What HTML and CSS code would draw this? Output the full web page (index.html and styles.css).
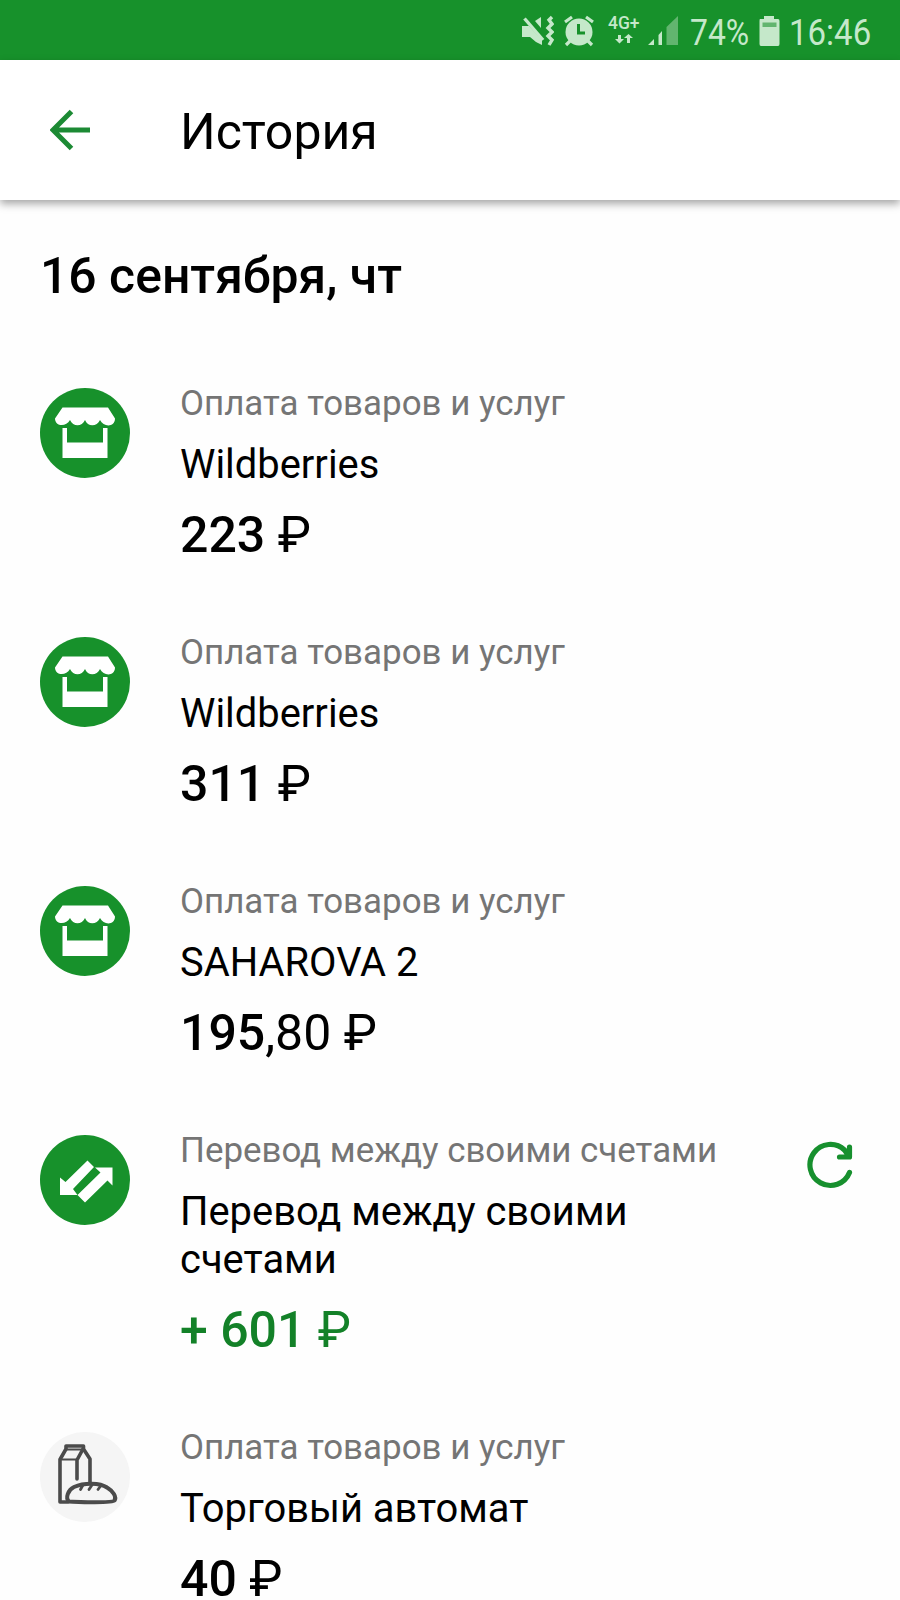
FILE: index.html
```html
<!DOCTYPE html>
<html lang="ru">
<head>
<meta charset="utf-8">
<title>История</title>
<link rel="stylesheet" href="styles.css">
</head>
<body>
<svg class="defs" width="0" height="0" aria-hidden="true">
  <symbol id="shop" viewBox="0 0 90 90">
    <circle cx="45" cy="45" r="45" fill="#17912b"/>
    <path d="M22.500 19.500H68L75 30.500C75 39.500 63.500 39.500 60 32C57 39 47.500 39 45 32C42 39 33 39 30 32C26 39.500 15 38.500 15 30.500Z" fill="#fff"/>
    <path d="M22.500 40H27V54.500H63V40H67.500V70H22.500Z" fill="#fff"/>
  </symbol>
</svg>
<header class="status">
  <svg class="mute" width="33" height="32" viewBox="0 0 33 32">
    <path d="M1 11H8L21 25V30L15 27L9 22H1Z" fill="#c5e8ca"/><path d="M14 6L20 2V13Z" fill="#c5e8ca"/>
    <path d="M3.500 3.500L22 25" stroke="#c5e8ca" stroke-width="3.400"/>
    <path d="M31 2L28 5L31 9L27 13L31 17L27 21L31 25L28 30" fill="none" stroke="#c5e8ca" stroke-width="3.400"/>
  </svg>
  <svg class="alarm" width="30" height="32" viewBox="0 0 30 32">
    <circle cx="15" cy="17" r="13.500" fill="#c5e8ca"/>
    <path d="M1 7L8 2M22 2L29 7M6 26L2 30M24 26L28 30" stroke="#c5e8ca" stroke-width="3.200"/>
    <path d="M14.500 9V18H21" fill="none" stroke="#17912b" stroke-width="3"/>
  </svg>
  <div class="net">
    <span class="net-label">4G+</span>
    <svg width="18" height="10" viewBox="0 0 18 10"><path d="M3 1H6V5H9L4.500 9.500L0 5H3ZM12 9H15V4H18L13.500 0L9 4H12Z" fill="#c5e8ca"/></svg>
  </div>
  <svg class="signal" width="30" height="30" viewBox="0 0 30 30">
    <path d="M0 30L6 24V30ZM10.500 30V20L14 16V30Z" fill="#c5e8ca"/><path d="M18.500 30V12L30 1V30Z" fill="#62b56f"/>
  </svg>
  <span class="stat percent"><span class="narrow">74%</span></span>
  <svg class="battery" width="21" height="30" viewBox="0 0 21 30">
    <path d="M1 3H5V0H15V3H19Q20.500 3 20.500 5V28Q20.500 30 19 30H2Q.5 30 .5 28V5Q.5 3 1 3Z" fill="#c5e8ca"/><path d="M3.500 6.500H17.500V11H3.500Z" fill="#62b56f"/>
  </svg>
  <span class="stat clock"><span class="narrow">16:46</span></span>
</header>
<nav class="bar">
  <svg class="back" width="42" height="42" viewBox="0 0 42 42"><path d="M21.500 2.500L3 21L21.500 39.500M3 21H40" fill="none" stroke="#1c8a34" stroke-width="5"/></svg>
  <h1 class="heading">История</h1>
</nav>
<main class="history">
  <h2 class="date">16 сентября, чт</h2>
  <ul class="list">
    <li class="item">
      <svg class="icon"><use href="#shop"/></svg>
      <div class="info"><div class="kind">Оплата товаров и услуг</div><div class="name">Wildberries</div><div class="sum"><b>223</b> ₽</div></div>
    </li>
    <li class="item">
      <svg class="icon"><use href="#shop"/></svg>
      <div class="info"><div class="kind">Оплата товаров и услуг</div><div class="name">Wildberries</div><div class="sum"><b>311</b> ₽</div></div>
    </li>
    <li class="item">
      <svg class="icon"><use href="#shop"/></svg>
      <div class="info"><div class="kind">Оплата товаров и услуг</div><div class="name">SAHAROVA 2</div><div class="sum"><b>195</b>,80 ₽</div></div>
    </li>
    <li class="item">
      <svg class="icon" viewBox="0 0 90 90">
        <circle cx="45" cy="45" r="45" fill="#17912b"/>
        <path d="M20 42.500L25.500 47L47.500 25.500L54 32L33 54L37.500 60H20Z" fill="#fff"/>
        <path d="M55 32.500H72.500V50.500L67.500 45.500L45 67.500L37.500 60L60.500 37.500Z" fill="#fff"/>
      </svg>
      <div class="info"><div class="kind">Перевод между своими счетами</div><div class="name">Перевод между своими<br>счетами</div><div class="sum income"><b>+ 601</b> ₽</div></div>
      <svg class="repeat" width="48" height="48" viewBox="0 0 48 48"><path d="M43.500 31.500A20.500 20.500 0 1 1 38.500 9L42 14M33.500 16H43.500V6" fill="none" stroke="#17902e" stroke-width="5.200" stroke-linecap="round" stroke-linejoin="round"/></svg>
    </li>
    <li class="item">
      <svg class="icon" viewBox="0 0 90 90" fill="none" stroke="#4b4b4b" stroke-linejoin="round" stroke-linecap="round">
        <circle cx="45" cy="45" r="45" fill="#f5f5f5" stroke="none"/>
        <path d="M28 70H20V27.500L26 17V14H43.500V17L50 27V50" stroke-width="3.600"/>
        <path d="M26 17.500H43.500M20 27.500H37" stroke-width="2.200"/>
        <path d="M43 17L37 28V47" stroke-width="3.600"/>
        <path d="M29 69.500C25 66 28 58 34 55C44 50.500 60 50.500 67 55.500C73 59 77 65 74.500 68.500C72 71.500 42 70 29 69.500Z" stroke-width="4"/>
        <path d="M43 53L40.500 57.500M52 53L49 57.500M61 53.500L58 57.500" stroke-width="2.800"/>
      </svg>
      <div class="info"><div class="kind">Оплата товаров и услуг</div><div class="name">Торговый автомат</div><div class="sum"><b>40</b> ₽</div></div>
    </li>
  </ul>
</main>
</body>
</html>
```

FILE: styles.css
```css
* { box-sizing: border-box; margin: 0; padding: 0; }
body { background: #fefefe; color: #000; font-family: Roboto, "Open Sans", sans-serif; }
svg { display: block; flex: none; }
.defs { position: absolute; }
.status { display: flex; align-items: flex-start; height: 60px; padding: 15px 0 0 521px; background: #17912b; color: #c5e8ca; }
.alarm { margin-left: 10px; }
.net { width: 31px; margin: 1px 0 0 14px; }
.net svg { margin: 3px 0 0 7px; }
.net-label { display: block; height: 15px; font-size: 17.5px; line-height: 15px; font-weight: 500; white-space: nowrap; }
.signal { margin-left: 9px; }
.stat { display: block; height: 32px; font-size: 37.5px; line-height: 34px; white-space: nowrap; }
.percent { width: 60px; margin-left: 12px; }
.percent .narrow { transform: scaleX(.85); }
.clock { width: 82px; margin-left: 9px; }
.battery { margin-left: 9px; margin-top: 1px; }
.narrow { display: inline-block; transform: scaleX(.88); transform-origin: left; }
.bar { display: flex; align-items: center; height: 140px; padding-left: 50px; background: #fff; box-shadow: 0 4px 8px rgba(0,0,0,.34); }
.heading { margin: 3px 0 0 88px; font-size: 50px; line-height: 60px; font-weight: 400; }
.history { padding: 46px 0 0 40px; }
.date { font-size: 49.9px; line-height: 60px; font-weight: 500; }
.list { list-style: none; margin-top: 77px; }
.item { display: flex; align-items: flex-start; margin-bottom: 67px; }
.item:last-child { margin-bottom: 0; }
.icon { width: 90px; height: 90px; margin-top: 5px; }
.info { width: 610px; margin-left: 50px; }
.kind { font-size: 34.9px; line-height: 42px; color: #757575; white-space: nowrap; }
.name { margin-top: 16px; font-size: 39.9px; line-height: 48px; }
.sum { margin-top: 16px; font-size: 50px; line-height: 60px; white-space: nowrap; }
.item:last-child .sum { margin-top: 26px; line-height: 40px; }
.sum b { font-weight: 500; }
.income { color: #138128; }
.repeat { margin: 11px 0 0 16px; }
```
